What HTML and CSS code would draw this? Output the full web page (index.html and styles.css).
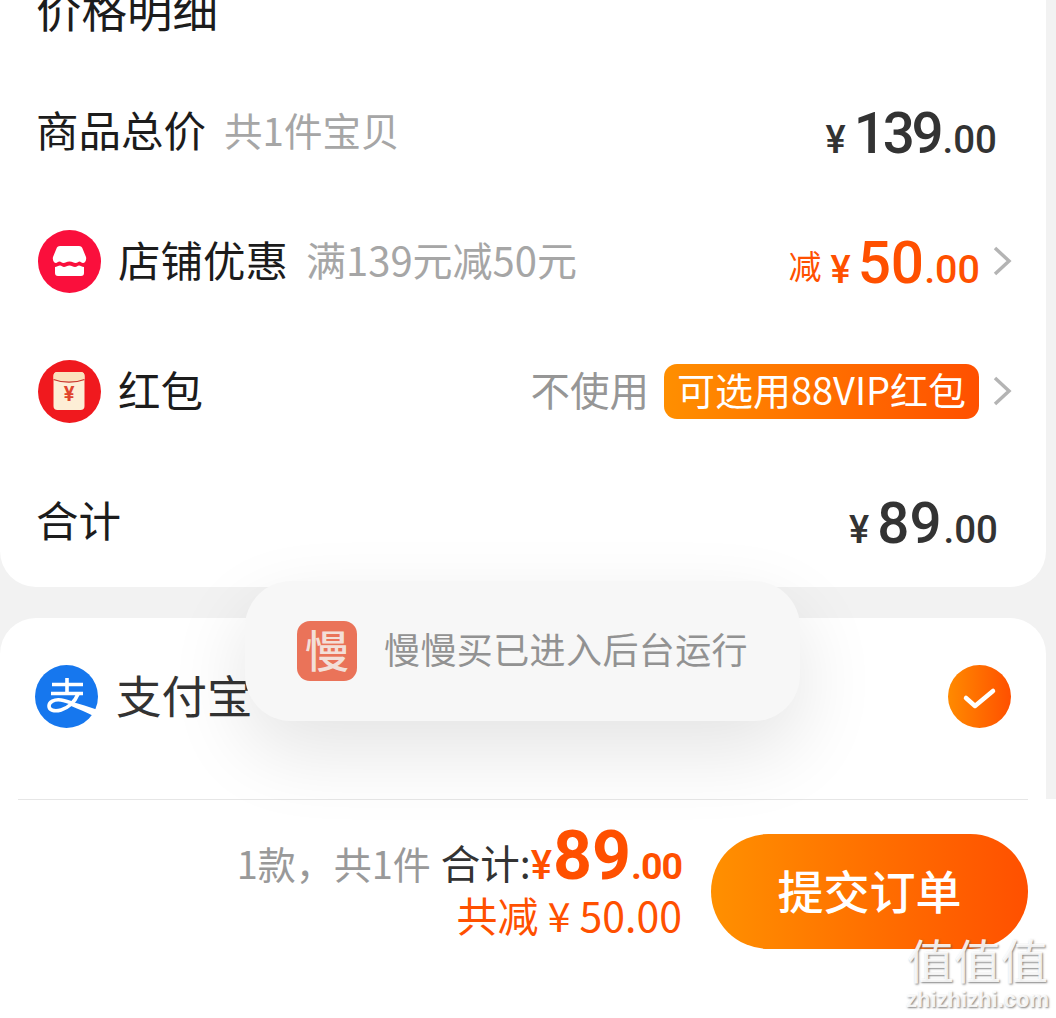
FILE: index.html
```html
<!DOCTYPE html>
<html lang="zh">
<head>
<meta charset="utf-8">
<title>价格明细</title>
<link rel="stylesheet" href="styles.css">
</head>
<body>
<div class="page">
  <section class="card price-card">
    <div class="title-row"><span class="title">价格明细</span></div>
    <div class="row">
      <div class="row-left"><span class="label">商品总价</span><span class="hint hint-small">共1件宝贝</span></div>
      <div class="amount amount-dark amount-goods"><span class="yen">¥</span><span class="int">139</span><span class="dec">.00</span></div>
    </div>
    <div class="row">
      <div class="row-left">
        <svg class="icon" viewBox="0 0 63 63"><circle cx="31.500" cy="31.500" r="31.500" fill="#fa0f3c"/><path d="M22 16h19c2 0 3 1 3.500 2.500L48 27c.8 3-1 6-3 6-1.500 0-2.500-1.500-3.500-1.500S39.500 33 37.500 33s-3-1.500-6-1.500S27.500 33 25.500 33s-2.500-1.500-4-1.500S19 33 18 33c-2 0-3.800-3-3-6l3.500-8.500C19 17 20 16 22 16z" fill="#fff"/><path d="M17 37c1.500 0 3.500-1.500 5-1.500s2.500 1.500 4 1.500 3.500-1.500 5.500-1.500 3.500 1.500 5.500 1.500 2.500-1.500 4-1.500 3 1.500 5 1.500v6c0 2-1 3-3 3H20c-2 0-3-1-3-3z" fill="#fff"/></svg>
        <span class="label">店铺优惠</span><span class="hint hint-wide">满139元减50元</span>
      </div>
      <div class="row-right">
        <div class="amount amount-orange"><span class="minus">减</span><span class="yen yen-gap">¥</span><span class="int">50</span><span class="dec">.00</span></div>
        <svg class="chevron" viewBox="0 0 20 32"><path d="M3 3l14 13L3 29" fill="none" stroke="#b4b4b4" stroke-width="3.500"/></svg>
      </div>
    </div>
    <div class="row">
      <div class="row-left">
        <svg class="icon" viewBox="0 0 63 63"><circle cx="31.500" cy="31.500" r="31.500" fill="#f0191e"/><rect x="15.500" y="12" width="31" height="38" rx="4" fill="#fdeed6"/><path d="M15.500 16c0-2.500 1.500-4 4-4h23c2.500 0 4 1.500 4 4v4c-9 3-22 3-31 0z" fill="#fbe2bd"/><path d="M15.500 19.500c9 3.500 22 3.500 31 0" fill="none" stroke="#c8322a" stroke-width="1.200"/><text x="31" y="41" class="packet-yen" text-anchor="middle">¥</text></svg>
        <span class="label">红包</span>
      </div>
      <div class="row-right">
        <span class="hint hint-use">不使用</span>
        <span class="badge">可选用88VIP红包</span>
        <svg class="chevron" viewBox="0 0 20 32"><path d="M3 3l14 13L3 29" fill="none" stroke="#b4b4b4" stroke-width="3.500"/></svg>
      </div>
    </div>
    <div class="row">
      <div class="row-left"><span class="label">合计</span></div>
      <div class="amount amount-dark amount-total"><span class="yen yen-gap">¥</span><span class="int">89</span><span class="dec">.00</span></div>
    </div>
  </section>

  <section class="card pay-card">
    <div class="pay-row">
      <div class="row-left pay-left">
        <svg class="icon" viewBox="0 0 63 63"><circle cx="31.500" cy="31.500" r="31.500" fill="#1677ee"/><g fill="none" stroke="#fff" stroke-width="3.600"><path d="M17 19.500h31M32 13v15.500M16 28.500h32"/><path d="M43 29c-3 8-10 14-17 16-7 2-12 0-12-4 0-4 5-7 12-6 4 .6 8 2 12 3.500"/></g><path d="M36 36.500c9 2.500 18 5.500 27 8.500l-3.500 6.500c-8-4-16-7.500-24.500-11z" fill="#fff"/></svg>
        <span class="label label-pay">支付宝</span>
      </div>
      <svg class="check" viewBox="0 0 63 63"><defs><linearGradient id="chk" x1="0" x2="1" y1="0" y2="0"><stop offset="0" stop-color="#ff8a00"/><stop offset="1" stop-color="#ff5000"/></linearGradient></defs><circle cx="31.500" cy="31.500" r="31.500" fill="url(#chk)"/><path d="M18 33l9 8 18-15" fill="none" stroke="#fff" stroke-width="4.500" stroke-linecap="round" stroke-linejoin="round"/></svg>
    </div>
  </section>

  <footer class="footer">
    <div class="summary">
      <div class="summary-line">
        <span class="count">1款，共1件</span>
        <span class="sum-label">合计:</span>
        <span class="sum-yen">¥</span><span class="sum-int">89</span><span class="sum-dec">.00</span>
      </div>
      <div class="saved">共减 ¥ 50.00</div>
    </div>
    <button class="submit"><span class="submit-text">提交订单</span></button>
  </footer>
</div>

<div class="toast">
  <span class="toast-icon">慢</span>
  <span class="toast-text">慢慢买已进入后台运行</span>
</div>

<div class="watermark">
  <div class="wm-big">值值值</div>
  <div class="wm-small">zhizhizhi.com</div>
</div>
</body>
</html>
```
FILE: styles.css
```css
* { box-sizing: border-box; }
html, body { margin: 0; height: 100%; }
body {
  background: #f2f2f2;
  font-family: "Noto Sans CJK SC", Roboto, sans-serif;
  overflow: hidden;
  position: relative;
  color: #1a1a1a;
}
.page { height: 1018px; display: flex; flex-direction: column; overflow: hidden; }
.card { background: #fff; width: 1046px; flex: none; }
.price-card { border-radius: 0 0 36px 36px; }
.title-row { height: 66px; overflow: hidden; }
.title { display: block; font-size: 45.500px; line-height: 45px; margin: -14px 0 0 36px; color: #1c1c1c; }
.row { height: 130px; display: flex; align-items: center; justify-content: space-between; padding: 0 34px 0 37px; }
.row:last-child { height: 131px; }
.row-left { display: flex; align-items: center; }
.row-right { display: flex; align-items: center; }
.icon { width: 63px; height: 63px; margin: 0 18px 0 1px; flex: none; }
.label { font-size: 42.500px; line-height: 50px; padding-bottom: 5px; margin-left: -1px; color: #1c1c1c; }
.hint { font-size: 39px; line-height: 50px; padding-bottom: 5px; color: #a6a6a6; margin-left: 18px; }
.hint-small { font-size: 38.500px; }
.hint-wide { font-size: 40px; }
.hint-use { margin: 0 15px 0 0; color: #969696; font-size: 39.500px; }
.amount { display: flex; align-items: baseline; font-family: Roboto, sans-serif; padding-top: 5px; }
.amount-dark { color: #333; margin-right: 14px; }
.amount-goods { margin-right: 15px; }
.amount-orange { color: #ff5000; font-weight: 500; margin-right: -1px; padding-top: 4px; }
.amount .int { font-size: 56.500px; font-weight: 500; }
.amount-goods .int { letter-spacing: -3.200px; }
.amount-orange .int { font-size: 58.500px; }
.amount .dec { font-size: 38.500px; font-weight: 500; margin-left: 2px; }
.amount-orange .dec { font-size: 39.500px; margin-left: 0; }
.amount .yen { font-size: 38px; font-weight: 500; margin-right: 8px; }
.amount-orange .yen { margin-right: 7px; }
.amount .yen-gap { margin-left: 9px; }
.amount .minus { font-family: "Noto Sans CJK SC", sans-serif; font-size: 33px; font-weight: 400; transform: translateY(-4px); }
.chevron { width: 20px; height: 32px; margin-left: 13px; flex: none; }
.packet-yen { font-size: 20px; font-family: Roboto, sans-serif; font-weight: 700; fill: #e0452d; }
.badge {
  height: 55px; width: 315px; border-radius: 13px; color: #fff; font-size: 38px; line-height: 50px; padding-bottom: 5px; text-align: center; white-space: nowrap;
  background: linear-gradient(90deg, #ff8f00, #ff5000);
}
.pay-card { margin-top: 31px; height: 181px; overflow: hidden; border-radius: 36px 36px 0 0; }
.pay-row { height: 156px; display: flex; align-items: center; justify-content: space-between; padding: 0 35px 0 34px; }
.pay-left .icon { margin: 0 19px 0 1px; }
.label-pay { font-size: 45.500px; color: #333; }
.check { width: 63px; height: 63px; flex: none; }
.footer {
  flex: 1; background: #fff; display: flex; justify-content: flex-end; align-items: flex-start; gap: 29px; padding: 35px 28px 0 0; position: relative;
}
.footer::before { content: ""; position: absolute; left: 18px; right: 28px; top: 0; height: 1px; background: #e6e6e6; }
.summary { display: flex; flex-direction: column; align-items: flex-end; margin-top: -7px; }
.summary-line { display: flex; align-items: baseline; height: 58px; line-height: 58px; }
.count { font-size: 38px; color: #999; margin-right: 10px; }
.sum-label { font-size: 39.500px; color: #333; }
.sum-yen { font-family: Roboto, sans-serif; font-size: 40px; color: #ff5000; font-weight: 500; }
.sum-int { font-family: Roboto, sans-serif; font-size: 68px; color: #ff5000; font-weight: 700; margin-left: 1px; }
.sum-dec { font-family: Roboto, sans-serif; font-size: 37.500px; letter-spacing: -1px; color: #ff5000; font-weight: 700; }
.saved { font-size: 41px; line-height: 50px; color: #ff5000; margin-top: 4px; }
.submit {
  width: 317px; height: 115px; border: 0; border-radius: 58px; color: #fff; font: 500 46px "Noto Sans CJK SC", sans-serif; padding: 0 0 6px;
  background: linear-gradient(90deg, #ff9000, #ff5000);
}
.toast {
  position: absolute; left: 245px; top: 581px; width: 555px; height: 140px; border-radius: 46px; background: #f7f7f7;
  box-shadow: 0 30px 80px rgba(0,0,0,.11); display: flex; align-items: center; padding-left: 52px;
}
.toast-icon {
  width: 60px; height: 60px; border-radius: 13px; background: #ea7359; color: #f3dfd8; font-size: 44px; line-height: 56px; text-align: center; font-weight: 500; flex: none;
}
.toast-text { font-size: 36px; letter-spacing: .4px; color: #929292; margin-left: 27px; padding-bottom: 6px; white-space: nowrap; }
.watermark { position: absolute; left: 905px; top: 930px; width: 145px; text-align: center; color: rgba(255,255,255,.9); text-shadow: 1px 1px 2px rgba(90,90,90,.75); }
.wm-big { font-size: 47px; line-height: 58px; white-space: nowrap; font-family: "Noto Sans CJK SC", sans-serif; }
.wm-small { font: 700 22px/24px "Liberation Sans", sans-serif; }
```
